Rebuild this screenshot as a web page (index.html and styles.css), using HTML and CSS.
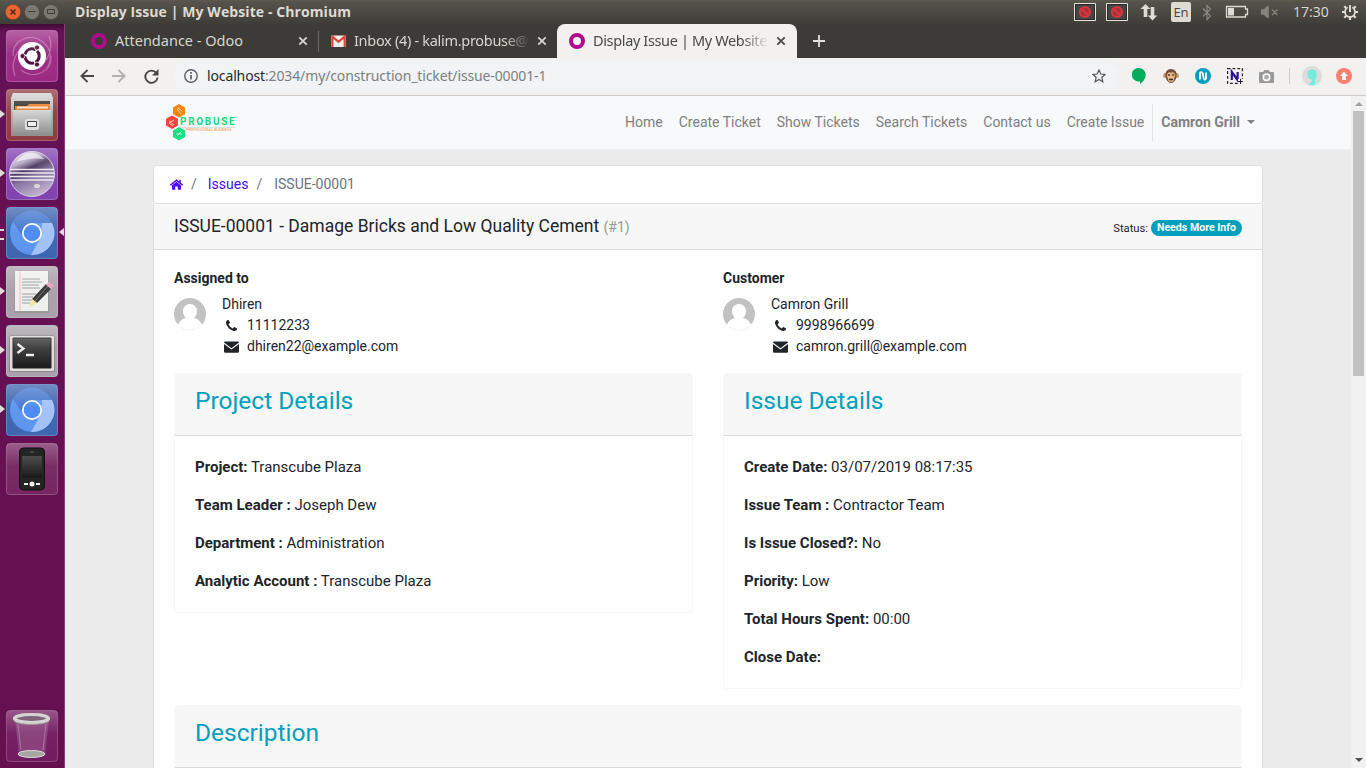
FILE: index.html
```html
<!DOCTYPE html>
<html lang="en">
<head>
<meta charset="utf-8">
<title>Display Issue | My Website</title>
<link rel="stylesheet" href="styles.css">
</head>
<body>
<svg width="0" height="0" class="defs">
  <defs>
    <linearGradient id="gloss" x2="0" y2="1"><stop offset="0" stop-color="#fff" stop-opacity=".26"/><stop offset=".45" stop-color="#fff" stop-opacity=".03"/><stop offset="1" stop-color="#fff" stop-opacity="0"/></linearGradient>
    <linearGradient id="metal" x2="0" y2="1"><stop offset="0" stop-color="#d5d5d5"/><stop offset="1" stop-color="#8e8e8e"/></linearGradient>
    <linearGradient id="screen" x2="0" y2="1"><stop offset="0" stop-color="#4c4c4c"/><stop offset="1" stop-color="#191919"/></linearGradient>
    <linearGradient id="orb" x1=".15" x2=".6" y2="1"><stop offset="0" stop-color="#e2dce9"/><stop offset=".25" stop-color="#b3a5c4"/><stop offset=".42" stop-color="#44305c"/><stop offset=".6" stop-color="#85719c"/><stop offset="1" stop-color="#c3b6d2"/></linearGradient>
    <symbol id="tile" viewBox="0 0 52 52"><rect x=".5" y=".5" width="51" height="51" rx="3.5" fill="url(#gloss)" stroke="#fff" stroke-opacity=".2"/></symbol>
    <symbol id="chromium" viewBox="0 0 52 52"><circle cx="26" cy="26" r="22" fill="#5c94ee"/><path d="M26 4a22 22 0 0 1 20 12H26L15 27 7 15A22 22 0 0 1 26 4z" fill="#4678cf"/><path d="M46 16a22 22 0 0 1-21 32l10-18 1-14z" fill="#a1c1f8"/><circle cx="26" cy="26" r="10" fill="#fff"/><circle cx="26" cy="26" r="8.3" fill="#4a8af4"/></symbol>
    <symbol id="close" viewBox="0 0 10 10"><path d="M1.3 1.3l7.4 7.4M8.7 1.3L1.3 8.7" stroke="currentColor" stroke-width="1.8"/></symbol>
    <symbol id="phone" viewBox="0 0 1408 1408"><path fill="currentColor" d="M1408 1112q0 27-10 70.500t-21 68.500q-21 50-122 106-94 51-186 51-27 0-53-3.500t-57.500-12.500-47-14.500-55.500-20.500-49-18q-98-35-175-83-127-79-264-216t-216-264q-48-77-83-175-3-9-18-49t-20.500-55.500-14.500-47-12.500-57.500-3.500-53q0-92 51-186 56-101 106-122 25-11 68.500-21t70.500-10q14 0 21 3 18 6 53 76 11 19 30 54t35 63.500 31 53.500q3 4 17.500 25t21.500 35.500 7 28.500q0 20-28.500 50t-62 55-62 53-28.500 46q0 9 5 22.500t8.500 20.500 14 24 11.500 19q76 137 174 235t235 174q2 1 19 11.500t24 14 20.500 8.500 22.500 5q18 0 46-28.500t53-62 55-62 50-28.500q14 0 28.500 7t35.500 21.500 25 17.500q25 15 53.500 31t63.500 35 54 30q70 35 76 53 3 7 3 21z"/></symbol>
    <symbol id="mail" viewBox="0 0 15 12"><path fill="currentColor" d="M0 1.500Q0 .5 1.200.5h12.600Q15 .5 15 1.500L7.500 7.200zM0 3l7.500 5.600L15 3v7.500q0 1.200-1.200 1.200H1.200Q0 11.700 0 10.500z"/></symbol>
    <symbol id="avatar" viewBox="0 0 32 32"><clipPath id="disc"><circle cx="16" cy="16" r="16"/></clipPath><g clip-path="url(#disc)"><path fill="#c2c2c2" d="M0 0h32v32H0z"/><path fill="#fff" d="M3 32c0-7 4-11 9-12-2-2-3-4-3-7 0-4 3-7 7-7s7 3 7 7c0 3-1 5-3 7 5 1 9 5 9 12z"/></g></symbol>
    <symbol id="blocked" viewBox="0 0 22 18"><path d="M.5.5h21v17H.5z" fill="#292929" stroke="#e4e3df"/><path d="M2 2h18v14H2z" fill="#454545"/><circle cx="11" cy="9" r="5.200" fill="#a3343a" stroke="#e5343b" stroke-width="1.800"/><path d="M7.500 5.500l7 7" stroke="#e5343b" stroke-width="1.800"/></symbol>
  </defs>
</svg>

<div class="desktop">
  <header class="panel">
    <div class="window-buttons">
      <svg width="16" height="16" viewBox="0 0 16 16"><circle cx="8" cy="8" r="7.700" fill="#ee6333" stroke="#454138" stroke-width=".5"/><path d="M5.500 5.500l5 5m0-5l-5 5" stroke="#48281b" stroke-width="1.500"/></svg>
      <svg width="16" height="16" viewBox="0 0 16 16"><circle cx="8" cy="8" r="7.600" fill="#7a786f" stroke="#45443d" stroke-width=".6"/><path d="M4.500 7.500h7" stroke="#3b3a34"/></svg>
      <svg width="16" height="16" viewBox="0 0 16 16"><circle cx="8" cy="8" r="7.600" fill="#7a786f" stroke="#45443d" stroke-width=".6"/><path d="M4.500 5.500h7v4h-7z" fill="none" stroke="#3b3a34"/></svg>
    </div>
    <div class="window-title">Display Issue | My Website - Chromium</div>
    <div class="indicators">
      <svg width="22" height="18"><use href="#blocked"/></svg>
      <svg width="22" height="18" class="ind-second"><use href="#blocked"/></svg>
      <svg width="18" height="18" viewBox="0 0 18 18" class="ind-net"><path d="M5.500 1l5 5H7.300v8H3.700V6H.5zM12.500 17.500l-4.800-5h3V4h3.600v8.500h3z" fill="#dfdbd2"/></svg>
      <span class="keyboard">En</span>
      <svg width="10" height="17" viewBox="0 0 10 17" class="ind-bt"><path d="M1 4.500l7.500 7.500L5 15.500v-14L8.500 5 1 12.500" fill="none" stroke="#8a8880" stroke-width="1.200"/></svg>
      <svg width="24" height="14" viewBox="0 0 24 14" class="ind-bat"><path d="M1.500 1.500h19v2.500h2v5.500h-2v2.500h-19z" fill="none" stroke="#dfdbd2" stroke-width="1.300"/><path d="M3 3h6v7.500H3z" fill="#dfdbd2"/></svg>
      <svg width="18" height="12" viewBox="0 0 18 12" class="ind-vol"><path d="M0 4h3l4-3.800v11.600L3 8H0zM11 3.500l5.500 5.500m0-5.500L11 9" fill="#85837b" stroke="#85837b" stroke-width="1.500"/></svg>
      <span class="clock">17:30</span>
      <svg width="16" height="16" viewBox="0 0 16 16"><circle cx="8" cy="8" r="5" fill="none" stroke="#dfdbd2" stroke-width="1.800"/><g stroke="#dfdbd2" stroke-width="2.200"><path d="M8 13v3M0 8h3M13 8h3M2.300 2.300l2 2M11.700 11.700l2 2M2.300 13.700l2-2M11.700 4.300l2-2"/></g><path d="M8 0v8" stroke="#4b4a43" stroke-width="4.500"/><path d="M8 1v7" stroke="#dfdbd2" stroke-width="2"/></svg>
    </div>
  </header>

  <div class="workspace">
    <nav class="launcher">
      <div class="app app-dash"><svg viewBox="0 0 52 52"><path d="M7 26C6 10 24 2 37 12c10 8 8 20 4 26M45 26c1 16-17 24-30 14M9 46C3 30 14 14 26 13M43 6c6 16-5 32-17 33" fill="none" stroke="#e9b8df" stroke-opacity=".4" stroke-width="1.300"/><circle cx="26" cy="26" r="14" fill="#fff"/><circle cx="26" cy="26" r="7.200" fill="none" stroke="#4f0f42" stroke-width="3" stroke-dasharray="13.500 1.600" stroke-dashoffset="6"/><g fill="#4f0f42" stroke="#fff" stroke-width=".7"><circle cx="16.500" cy="26" r="2.500"/><circle cx="31" cy="17.500" r="2.500"/><circle cx="31" cy="34.500" r="2.500"/></g><use href="#tile"/></svg></div>
      <div class="app app-files running"><svg viewBox="0 0 52 52"><path d="M7 4h38l2 5v38H5V9z" fill="url(#metal)"/><path d="M8 12h36v12H8z" fill="#3a332e"/><path d="M9 17h12l2-2h21v7H9z" fill="#ec7e2b"/><path d="M11 17.500h31v2H11z" fill="#f9e2c8"/><path d="M7 21h38v25H7z" fill="url(#metal)"/><rect x="19" y="30" width="14" height="11" rx="2" fill="#ddd"/><path d="M21.500 32.500h9v5h-9z" fill="#eee" stroke="#444"/><use href="#tile"/></svg></div>
      <div class="app app-eclipse running"><svg viewBox="0 0 52 52"><circle cx="26" cy="26" r="22.500" fill="url(#orb)" stroke="#d7cfe3"/><path d="M10 14Q24-3 38 11 25 9 10 14z" fill="#fff" opacity=".6"/><path d="M4 21.500h44M4 25h44M4 28.500h44M5 32h42" stroke="#eee8f5" stroke-width="1.300"/><ellipse cx="31" cy="38" rx="3" ry="2" fill="#fff" opacity=".6"/><use href="#tile"/></svg></div>
      <div class="app app-chromium running double active"><svg viewBox="0 0 52 52"><use href="#chromium"/><use href="#tile"/></svg></div>
      <div class="app app-light running"><svg viewBox="0 0 52 52"><path d="M8 5h35v42H8z" fill="#999"/><path d="M9 5h33v40H9z" fill="#efefed"/><path d="M14 5v40" stroke="#f3b9b9"/><path d="M16 13h18M16 16h20M16 19h17M16 22h18M16 28h14M16 31h11M16 34h12M16 37h8" stroke="#999da0"/><path d="M26 33l14-15 5 5-14 14z" fill="#353535"/><path d="M29 35l13-15" stroke="#777"/><path d="M40 19l3-3 5 4-3 3z" fill="#ea9dbd"/><path d="M26 33l5 4-8 4z" fill="#f0e6a1"/><use href="#tile"/></svg></div>
      <div class="app app-light running"><svg viewBox="0 0 52 52"><rect x="3.500" y="10.500" width="45" height="36" rx="1.500" fill="#deddda" stroke="#898989"/><path d="M7 13h38v30H7z" fill="url(#screen)" stroke="#222"/><path d="M11.500 19l6 4.500-6 4.500M20 30h8" fill="none" stroke="#eee" stroke-width="2.300"/><use href="#tile"/></svg></div>
      <div class="app app-chromium running"><svg viewBox="0 0 52 52"><use href="#chromium"/><use href="#tile"/></svg></div>
      <div class="app app-phone"><svg viewBox="0 0 52 52"><use href="#tile"/><rect x="13.500" y="5" width="25" height="42" rx="4" fill="#242424" stroke="#111"/><path d="M16 13h20v22H16z" fill="url(#screen)"/><path d="M24 9h4" stroke="#666"/><path d="M18 41h4M30 41h4" stroke="#eee" stroke-width="2"/><circle cx="26" cy="41" r="2.500" fill="#eee"/></svg></div>
      <div class="app app-trash"><svg viewBox="0 0 52 52"><use href="#tile"/><path d="M9 9l4 36h26l4-36z" fill="#bd91b4" fill-opacity=".3"/><path d="M12 14l3 26M40 14l-3 26" stroke="#d5b9cf" stroke-opacity=".4"/><ellipse cx="25.500" cy="44" rx="13.500" ry="3.500" fill="#a6a7a3" stroke="#dadbd8"/><ellipse cx="25.500" cy="8.500" rx="17" ry="4" fill="#80627b" stroke="#d5d6d2" stroke-width="3.200"/><path d="M8 11c5 4.500 30 4.500 35 0" fill="none" stroke="#a4a5a0"/></svg></div>
    </nav>

    <main class="browser">
      <div class="tabs">
        <div class="tab tab-odoo"><span class="ring"></span><span class="tab-title">Attendance - Odoo</span><svg class="tab-close"><use href="#close"/></svg></div>
        <div class="tab tab-mail"><svg width="15" height="12" viewBox="0 0 15 12"><path d="M0 .5h15V12H0z" fill="#eee"/><path d="M1.300 12V1.500l6.200 5.300 6.200-5.300V12" fill="none" stroke="#db4437" stroke-width="2.200"/></svg><span class="tab-title">Inbox (4) - kalim.probuse@</span><svg class="tab-close"><use href="#close"/></svg></div>
        <div class="tab tab-active"><span class="ring"></span><span class="tab-title">Display Issue | My Website</span><svg class="tab-close"><use href="#close"/></svg></div>
        <svg class="tab-new" width="12" height="12" viewBox="0 0 12 12"><path d="M6 0v12M0 6h12" stroke="#e4e2dc" stroke-width="1.800"/></svg>
      </div>

      <div class="toolbar">
        <svg width="14" height="14" viewBox="0 0 14 14"><path d="M14 7H1.500M7.500 1L1.400 7l6.100 6" fill="none" stroke="#484848" stroke-width="1.800"/></svg>
        <svg width="14" height="14" viewBox="0 0 14 14" class="forward"><path d="M0 7h12.500M6.500 1l6.100 6-6.100 6" fill="none" stroke="#b0b0b0" stroke-width="1.800"/></svg>
        <svg width="15" height="15" viewBox="0 0 15 15" class="reload"><path d="M12.300 4A6.100 6.100 0 1 0 13.500 8.500" fill="none" stroke="#454545" stroke-width="1.900"/><path d="M14.500 0v6.500H8z" fill="#454545"/></svg>
        <div class="address">
          <svg width="14" height="14" viewBox="0 0 14 14"><circle cx="7" cy="7" r="6.200" fill="none" stroke="#5c6064" stroke-width="1.400"/><path d="M7 6v4.500M7 3v1.700" stroke="#5c6064" stroke-width="1.700"/></svg>
          <span class="url">localhost<span class="url-path">:2034/my/construction_ticket/issue-00001-1</span></span>
          <svg width="14" height="14" viewBox="0 0 14 14" class="star"><path d="M7 1l1.800 4 4.300.4-3.200 2.900.9 4.400L7 10.400l-3.800 2.300.9-4.400L.9 5.400 5.200 5z" fill="none" stroke="#515559" stroke-width="1.200"/></svg>
        </div>
        <div class="extensions">
          <svg width="14" height="16" viewBox="0 0 14 16"><path d="M7 0a6.700 6.700 0 0 0-1 13.400h2V16c3-2 5.700-5.500 5.700-9.200A6.800 6.800 0 0 0 7 0z" fill="#03ac5b"/></svg>
          <svg width="16" height="16" viewBox="0 0 16 16" class="ext-monkey"><circle cx="2.500" cy="7.500" r="2.500" fill="#c79b70"/><circle cx="13.500" cy="7.500" r="2.500" fill="#c79b70"/><path d="M8 1c4 0 6 3 5.500 7S11 15 8 15s-5-3-5.500-7S4 1 8 1z" fill="#76503a"/><path d="M5.500 4.500c2-1 2.500.5 2.500.5s.5-1.500 2.500-.5c2 1 2 3.500 1 5s.5 4.500-3.500 4.500-2.500-3-3.500-4.500-.5-4 1-5z" fill="#e6b98d"/><path d="M6 6v2M10 6v2M6 11.500h4" stroke="#3f291e" stroke-width="1.300"/></svg>
          <svg width="16" height="16" viewBox="0 0 16 16" class="ext-n"><circle cx="8" cy="8" r="8" fill="#079fbe"/><path d="M5 11.500V6c0-2.500 2.200-2.200 2.800-.2l.9 4.500c.6 2 2.300 1.700 2.300-.3V4.500" fill="none" stroke="#fff" stroke-width="1.800"/></svg>
          <svg width="16" height="16" viewBox="0 0 16 16" class="ext-box"><path d="M.6.6h14.800v14.800H.6z" fill="none" stroke="#222" stroke-width="1.200" stroke-dasharray="2.800 2.100"/><path d="M4.800 12V4l5.800 8V4" fill="none" stroke="#291296" stroke-width="2.200"/><path d="M11 11h5v5h-5z" fill="#f2f1ef"/><path d="M13.500 11v5M11 13.500h5" stroke="#222"/></svg>
          <svg width="15" height="13" viewBox="0 0 15 13" class="ext-camera"><path d="M1 2h3l1.500-2h4L11 2h3q1 0 1 1v9q0 1-1 1H1q-1 0-1-1V3q0-1 1-1z" fill="#999"/><circle cx="7.500" cy="7.200" r="3.200" fill="#aaa" stroke="#fff" stroke-width="1.600"/></svg>
          <span class="ext-divider"></span>
          <svg width="20" height="20" viewBox="0 0 20 20" class="ext-user"><circle cx="10" cy="10" r="10" fill="#dcdcdc"/><path d="M5.500 7c0-4 8.500-5 9 0 .3 4-.5 6-1.500 7v5H7c0-1.500 3-2.500 3-5.500C6 13.500 5.500 10 5.500 7z" fill="#72eddb"/></svg>
          <svg width="16" height="16" viewBox="0 0 16 16" class="ext-up"><circle cx="8" cy="8" r="8" fill="#fa7e70"/><path d="M8 3.500l4 4.500H9.800v4H6.200V8H4z" fill="#fff"/></svg>
        </div>
      </div>

      <div class="viewport">
        <div class="page">
          <div class="navbar">
            <div class="logo">
              <svg width="22" height="37" viewBox="0 0 22 37"><path d="M14 0l6 3.500v6.800L14 13.500l-6-3.200V3.500z" fill="#f7860d"/><path d="M7 11.500l6 3.300v6.800l-6 3.400-6-3.400v-6.800z" fill="#f6463f"/><path d="M14 23l6 3.400V33l-6 3.500L8 33v-6.600z" fill="#12e27f"/><path d="M12 5l4 5m-3-6l4 3M4 17l5 4m0-5l-5 3 4 3M11 30h6m-5 2l5-5" fill="none" stroke="#fff" stroke-opacity=".65"/></svg>
              <div class="logo-text"><b>PROBUSE</b><span>PROFESSIONAL BUSINESS</span></div>
            </div>
            <div class="menu"><a>Home</a><a>Create Ticket</a><a>Show Tickets</a><a>Search Tickets</a><a>Contact us</a><a>Create Issue</a><a class="user">Camron Grill<i class="caret"></i></a></div>
          </div>

          <div class="container">
            <div class="breadcrumb"><svg width="13" height="11" viewBox="0 0 13 11"><path d="M6.500 2.800L11 6.500V10q0 .7-.7.700H7.800V7.500H5.200v3.200H2.700q-.7 0-.7-.7V6.500z" fill="#4b0bfa"/><path d="M.4 6.200L6.500 1.200l6.100 5M10 .8v3" fill="none" stroke="#4b0bfa" stroke-width="1.500"/></svg><span class="slash">/</span><a>Issues</a><span class="slash second">/</span><span class="current">ISSUE-00001</span></div>
            <section class="issue">
              <div class="issue-header"><h4>ISSUE-00001 - Damage Bricks and Low Quality Cement <small>(#1)</small></h4><div class="status">Status: <span class="badge">Needs More Info</span></div></div>
              <div class="issue-body">
                <div class="columns contacts">
                  <div><strong>Assigned to</strong><div class="contact"><svg class="avatar"><use href="#avatar"/></svg><div><div>Dhiren</div><div class="line"><svg class="fa-phone"><use href="#phone"/></svg>11112233</div><div class="line"><svg class="fa-mail"><use href="#mail"/></svg>dhiren22@example.com</div></div></div></div>
                  <div><strong>Customer</strong><div class="contact"><svg class="avatar"><use href="#avatar"/></svg><div><div>Camron Grill</div><div class="line"><svg class="fa-phone"><use href="#phone"/></svg>9998966699</div><div class="line"><svg class="fa-mail"><use href="#mail"/></svg>camron.grill@example.com</div></div></div></div>
                </div>
                <div class="columns details">
                  <div class="card"><h3>Project Details</h3><div class="fields"><p><b>Project:</b> Transcube Plaza</p><p><b>Team Leader :</b> Joseph Dew</p><p><b>Department :</b> Administration</p><p><b>Analytic Account :</b> Transcube Plaza</p></div></div>
                  <div class="card"><h3>Issue Details</h3><div class="fields"><p><b>Create Date:</b> 03/07/2019 08:17:35</p><p><b>Issue Team :</b> Contractor Team</p><p><b>Is Issue Closed?:</b> No</p><p><b>Priority:</b> Low</p><p><b>Total Hours Spent:</b> 00:00</p><p><b>Close Date:</b></p></div></div>
                </div>
                <div class="card description"><h3>Description</h3><div class="fields"></div></div>
              </div>
            </section>
          </div>
        </div>
        <div class="scrollbar"><i class="arrow-up"></i><div class="thumb"></div><i class="arrow-down"></i></div>
      </div>
    </main>
  </div>
</div>
</body>
</html>
```

FILE: styles.css
```css
* { box-sizing: border-box; }
body { margin: 0; overflow: hidden; font: 14px/21px Roboto, sans-serif; color: #212529; }
svg { display: block; flex: none; }
.defs { position: absolute; }
.desktop { width: 1366px; height: 768px; display: flex; flex-direction: column; overflow: hidden; }

.panel { height: 24px; flex: none; display: flex; align-items: center; padding: 0 8px 0 5px; background: linear-gradient(#5c5a4d, #55534b 2px, #3e3d37); color: #dfdbd2; font-family: "Open Sans", sans-serif; }
.window-buttons { display: flex; gap: 3px; width: 70px; padding-bottom: 1px; }
.window-title { font-weight: 700; font-size: 14px; letter-spacing: .09px; line-height: 20px; padding-bottom: 1px; white-space: nowrap; }
.indicators { margin-left: auto; display: flex; align-items: center; }
.ind-second { margin-left: 10px; }
.ind-net { margin-left: 12px; }
.keyboard { width: 20px; height: 20px; margin-left: 13px; border-radius: 2px; background: #dfdbd2; color: #45443e; line-height: 21px; text-align: center; font-size: 13px; }
.ind-bt { margin-left: 11px; }
.ind-bat { margin-left: 13px; }
.ind-vol { margin-left: 12px; }
.clock { margin: 0 11px 2px 14px; width: 38px; font-size: 14px; }

.workspace { display: flex; flex: 1; min-height: 0; }
.launcher { width: 65px; flex: none; display: flex; flex-direction: column; gap: 7px; padding: 6px 0 6px 6px; background: linear-gradient(#3f0a36, #651156 7px, #65104f); border-right: 1px solid #843d76; }
.app { position: relative; width: 52px; height: 52px; border-radius: 4px; }
.app > svg { width: 52px; height: 52px; }
.app-dash { background: #9b2a83; }
.app-files { background: #903d42; }
.app-eclipse { background: #8143b0; }
.app-chromium { background: #3e65af; }
.app-light { background: #aaa0ab; }
.app-phone { background: #762662; }
.app-trash { background: #721b60; margin-top: auto; }
.running::before { content: ""; position: absolute; left: -6px; top: 21px; border: 4px solid transparent; border-left: 5px solid #ddd; border-right: 0; }
.double::before { top: 22px; width: 4px; height: 7px; border: solid #ddd; border-width: 2px 0; }
.active::after { content: ""; position: absolute; right: -6px; top: 21px; border: 4px solid transparent; border-right: 5px solid #ddd; border-left: 0; }

.browser { flex: 1; min-width: 0; display: flex; flex-direction: column; }
.tabs { height: 34px; flex: none; display: flex; align-items: center; background: #3c3b37; color: #d8d5cd; font: 14.500px/20px "Noto Sans", sans-serif; }
.tab { height: 34px; display: flex; align-items: center; }
.tab-odoo { width: 253px; padding-left: 26px; }
.tab-mail { width: 239px; padding-left: 13px; position: relative; }
.tab-mail::before { content: ""; position: absolute; left: 0; top: 7px; height: 21px; border-left: 1px solid #6d6c67; }
.tab-active { width: 240px; padding-left: 12px; background: #f2f1ef; color: #494949; border-radius: 8px 8px 0 0; }
.ring { width: 16px; height: 16px; border: 4px solid #ad0c8a; border-radius: 50%; }
.tab-title { margin-left: 8px; padding-bottom: 2px; width: 176px; white-space: nowrap; }
.tab-odoo .tab-title { width: 183px; }
.tab-mail .tab-title { letter-spacing: -.3px; mask-image: linear-gradient(90deg, #000 86%, transparent); }
.tab-active .tab-title { letter-spacing: -.36px; mask-image: linear-gradient(90deg, #000 85%, transparent); }
.tab-close { width: 10px; height: 10px; margin-left: auto; margin-right: 10px; }
.tab-active .tab-close { margin-right: 11px; }
.tab-new { margin-left: 16px; }

.toolbar { height: 38px; flex: none; display: flex; align-items: center; padding: 0 14px 1px 15px; background: #f2f1ef; border-bottom: 1px solid #ccc; }
.forward { margin-left: 18px; }
.reload { margin-left: 18px; }
.address { height: 30px; width: 944px; margin-left: 14px; padding: 0 11px; display: flex; align-items: center; border-radius: 15px; background: #f1f3f4; }
.url { margin-left: 9px; color: #25282b; font: 14px/20px "Noto Sans", sans-serif; letter-spacing: -.13px; white-space: nowrap; }
.url-path { color: #7b8085; }
.star { margin-left: auto; }
.extensions { display: flex; align-items: center; margin-left: auto; }
.ext-monkey { margin-left: 17px; }
.ext-n, .ext-box, .ext-camera { margin-left: 16px; }
.ext-divider { width: 1px; height: 16px; margin-left: 15px; background: #ccc; }
.ext-user { margin-left: 12px; }
.ext-up { margin-left: 14px; }

.viewport { display: flex; flex: 1; min-height: 0; }
.page { flex: 1; background: #ebebeb; overflow: hidden; }
.navbar { height: 54px; display: flex; align-items: center; justify-content: space-between; padding: 0 88px 0 100px; background: #f8f9fa; border-bottom: 1px solid #efefef; }
.logo { display: flex; width: 71px; height: 37px; }
.logo-text { display: flex; flex-direction: column; margin-left: -7px; padding-top: 12px; white-space: nowrap; }
.logo-text b { color: #18d87a; font: 700 10px/11px Roboto, sans-serif; letter-spacing: 1.700px; border-bottom: 1px solid #ddd; }
.logo-text span { padding-left: 6px; color: #f7933d; font-size: 3.800px; line-height: 4px; }
.menu { display: flex; color: #7f8081; white-space: nowrap; }
.menu a { height: 37px; padding: 8px; line-height: 21px; }
.menu .user { border-left: 1px solid #e2e3e5; font-weight: 700; display: flex; align-items: center; padding: 0 8px; }
.caret { border: 4px solid transparent; border-top-color: #7f8081; border-bottom: 0; margin: 0 0 2px 7px; }

.container { width: 1110px; margin: 15px 0 0 88px; }
.breadcrumb { height: 39px; display: flex; align-items: center; padding: 0 16px 1px; background: #fff; border: 1px solid #dedede; border-radius: 4px; }
.breadcrumb a { color: #4b0bfa; }
.slash { margin: 0 11px 0 8px; color: #6c757d; }
.second { margin-right: 12px; }
.current { color: #6c757d; }
.issue { height: 700px; background: #fff; border: 1px solid #dedede; border-top: 0; }
.issue-header { height: 46px; padding: 0 20px; display: flex; align-items: center; justify-content: space-between; background: #f7f7f7; border-bottom: 1px solid #d9d9d9; }
h4 { margin: 0; font-size: 17.500px; font-weight: 400; }
h4 small { color: #999; font-size: 14px; }
.status { font-size: 11.200px; line-height: 19px; display: flex; align-items: center; gap: 3px; padding-top: 3px; }
.badge { width: 91px; height: 16px; text-align: center; border-radius: 8px; background: #00a0bd; color: #fff; font-weight: 700; font-size: 10.600px; line-height: 16px; white-space: nowrap; }
.issue-body { padding: 18px 20px; }
.columns { display: grid; grid-template-columns: 519px 519px; gap: 30px; align-items: start; }
.contacts strong { display: block; margin-bottom: 5px; }
.contact { display: flex; gap: 16px; }
.avatar { width: 32px; height: 32px; margin-top: 4px; }
.line { display: flex; align-items: center; height: 21px; }
.fa-phone { width: 11px; height: 11px; margin: 0 10px 0 4px; }
.fa-mail { width: 15px; height: 12px; margin: 0 8px 0 2px; }
.details { margin-top: 16px; }
.card { border: 1px solid #f7f7f7; border-radius: 4px; }
h3 { margin: 0; height: 62px; padding: 11px 20px; background: #f7f7f7; border-bottom: 1px solid #d9d9d9; color: #00a0bd; font-size: 24.500px; line-height: 31px; font-weight: 400; }
.fields { padding: 20px 20px 4px; font-size: 15px; line-height: 22px; }
.fields p { margin: 0 0 16px; }
.description { margin-top: 16px; }

.scrollbar { width: 15px; display: flex; flex-direction: column; align-items: center; background: #f1f1f1; }
.arrow-up, .arrow-down { border: 4px solid transparent; }
.arrow-up { border-bottom-color: #a0a0a0; border-top: 0; margin: 6px 0 5px; }
.thumb { width: 11px; height: 265px; background: #c1c1c1; }
.arrow-down { border-top-color: #505050; border-bottom: 0; margin: auto 0 6px; }
```
